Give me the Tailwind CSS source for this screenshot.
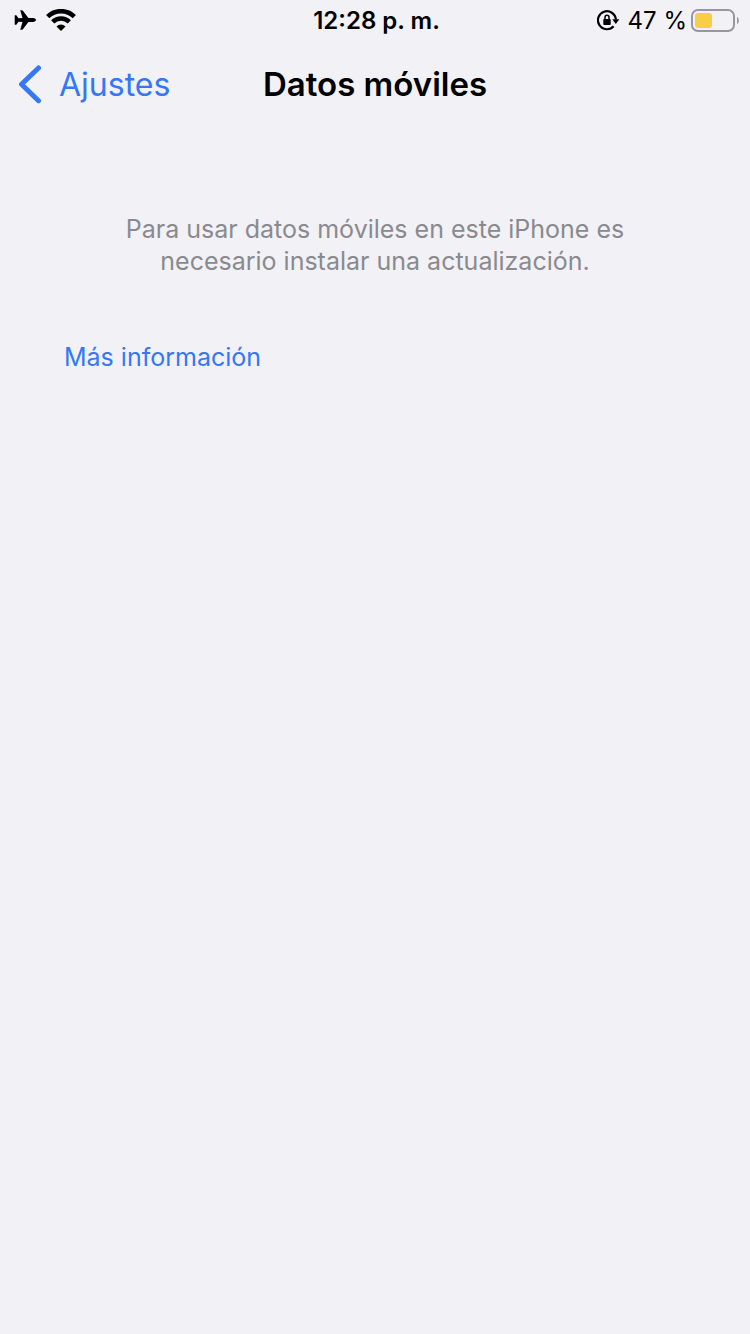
<!DOCTYPE html>
<html lang="es">
<head>
<meta charset="utf-8">
<meta name="viewport" content="width=device-width, initial-scale=1">
<title>Datos móviles</title>
<script src="https://cdn.jsdelivr.net/npm/@tailwindcss/browser@4"></script>
</head>
<body class="min-h-screen bg-[#f2f1f6] font-['Inter','Liberation_Sans',sans-serif] text-black">
<div class="grid h-10 grid-cols-[1fr_auto_1fr] items-center pl-3.5 pr-[11px]">
  <div class="flex items-center gap-2.5">
    <svg class="h-5 w-[22px]" viewBox="0 0 22 20" role="img" aria-label="Modo avión"><path d="M22 10c0-1.100-1.600-1.900-3-1.900h-4.600L8.900.8C8.600.4 8.300.2 7.900.2H6.200l2.300 7.900-4 .200L2.300 5.300H.700V14.700H2.300L4.500 11.700l4 .200-2.300 7.900h1.700c.4 0 .7-.2 1-.6l5.500-7.300H19c1.400 0 3-.8 3-1.900Z"/></svg>
    <svg class="h-[22px] w-[30px]" viewBox="0 0 30 22" role="img" aria-label="Wi-Fi"><g fill="none" stroke="#000" stroke-width="4.600"><path d="M1.700 7.600a19 19 0 0 1 26.600 0"/><path d="M6.700 12.800a12 12 0 0 1 16.600 0"/></g><path d="M15 22l-4.500-4.600a6.500 6.500 0 0 1 9 0Z"/></svg>
  </div>
  <time class="pt-0.5 text-2xl font-semibold">12:28 p. m.</time>
  <div class="flex items-center justify-end gap-1 pt-0.5">
    <div class="flex items-center gap-2">
      <svg class="h-[22px] w-[23px]" viewBox="0 0 23 22" role="img" aria-label="Orientación bloqueada"><path d="M16.600 16.300A9 9 0 1 1 18.900 9.500" fill="none" stroke="#000" stroke-width="2.200"/><path d="M15.300 9.300h7l-3.500 4.700Z"/><rect x="6.300" y="9" width="7.400" height="6" rx=".8"/><path d="M8 10V7.300a2 2 0 0 1 4 0V10" fill="none" stroke="#000" stroke-width="1.500"/></svg>
      <span class="text-2xl">47 %</span>
    </div>
    <svg class="h-6 w-12" viewBox="0 0 48 24" role="img" aria-label="Batería al 47 %"><rect x="1" y="1" width="42" height="21" rx="6" fill="none" stroke="#98979b" stroke-width="2"/><rect x="4" y="4" width="17" height="15" rx="3" fill="#f7ce46"/><path d="M46 8c2.500 1 2.500 6 0 7Z" fill="#98979b"/></svg>
  </div>
</div>
<header class="grid h-22 grid-cols-[1fr_auto_1fr] items-center px-4 pt-0.5">
  <a href="#" class="flex items-center gap-4 text-[32px] text-[#3478f6]">
    <svg class="h-10 w-[27px]" viewBox="0 0 27 40" fill="none" stroke="currentColor" stroke-width="5" stroke-linecap="round" stroke-linejoin="round" aria-hidden="true"><path d="M22.500 3 5.500 19.200l17 16.500"/></svg>Ajustes</a>
  <h1 class="text-[33px] font-semibold">Datos móviles</h1>
</header>
<main class="px-16 pt-[85px]">
  <p class="text-center text-[25px] leading-8 text-[#8a8a8e]">Para usar datos móviles en este iPhone es<br>necesario instalar una actualización.</p>
  <a href="#" class="mt-16 inline-block text-[25px] leading-8 text-[#3478f6]">Más información</a>
</main>
</body>
</html>
